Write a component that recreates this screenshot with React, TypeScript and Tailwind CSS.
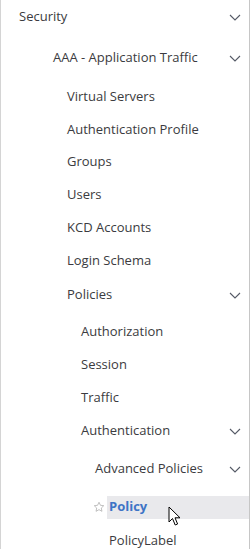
import React from "react";

const Chevron = () => (
  <svg width="12" height="7" viewBox="0 0 12 7" className="absolute right-[10px] top-[14px]">
    <path d="M1 1 L6 6 L11 1" fill="none" stroke="#555a66" strokeWidth="1.1" />
  </svg>
);

type Row = { label: string; indent: number; h: number; chevron?: boolean; active?: boolean };

const rows: Row[] = [
  { label: "Security", indent: 19, h: 41, chevron: true },
  { label: "AAA - Application Traffic", indent: 53, h: 39, chevron: true },
  { label: "Virtual Servers", indent: 67, h: 33 },
  { label: "Authentication Profile", indent: 67, h: 32 },
  { label: "Groups", indent: 67, h: 33 },
  { label: "Users", indent: 67, h: 33 },
  { label: "KCD Accounts", indent: 67, h: 33 },
  { label: "Login Schema", indent: 67, h: 34 },
  { label: "Policies", indent: 67, h: 37, chevron: true },
  { label: "Authorization", indent: 81, h: 33 },
  { label: "Session", indent: 81, h: 33 },
  { label: "Traffic", indent: 81, h: 33 },
  { label: "Authentication", indent: 81, h: 38, chevron: true },
  { label: "Advanced Policies", indent: 95, h: 38, chevron: true },
  { label: "Policy", indent: 109, h: 34, active: true },
  { label: "PolicyLabel", indent: 109, h: 34 },
];

export default function App() {
  return (
    <div
      className="w-[251px] h-[549px] overflow-hidden bg-white border-l border-l-[#d4d4d4] relative"
      style={{ fontFamily: "'Open Sans', 'Noto Sans', sans-serif" }}
    >
      <div className="absolute right-[1px] top-0 bottom-0 w-px bg-[#c6c6c6]" />
      <div className="flex flex-col">
        {rows.map((r, i) => (
          <div key={i} className="relative shrink-0" style={{ height: r.h }}>
            <div
              className="relative h-[34px] flex items-center text-[13px] text-[#3b3b40]"
              style={{ paddingLeft: r.indent - 1 }}
            >
              {r.active ? (
                <>
                  <svg width="12" height="12" viewBox="0 0 24 24" className="absolute left-[92px] top-[11px]">
                    <path d="M12 2.5l2.9 6.1 6.6.8-4.9 4.6 1.3 6.6L12 17.3l-5.9 3.3 1.3-6.6-4.9-4.6 6.6-.8z" fill="none" stroke="#b0b0b0" strokeWidth="1.6" strokeLinejoin="round" />
                  </svg>
                  <div className="absolute left-[106px] right-[2px] top-[6px] h-[23px] bg-[#e9e9ec]" />
                  <span className="relative font-bold text-[#3e74c6]">{r.label}</span>
                  <svg width="14" height="21" viewBox="0 0 14 21" className="absolute left-[167px] top-[16px]">
                    <path d="M1 1 L1 16 L4.5 12.5 L7.2 19 L9.6 18 L7 11.8 L12 11.8 Z" fill="#fff" stroke="#000" strokeWidth="1" strokeLinejoin="round" />
                  </svg>
                </>
              ) : (
                <span>{r.label}</span>
              )}
              {r.chevron && <Chevron />}
            </div>
          </div>
        ))}
      </div>
    </div>
  );
}
